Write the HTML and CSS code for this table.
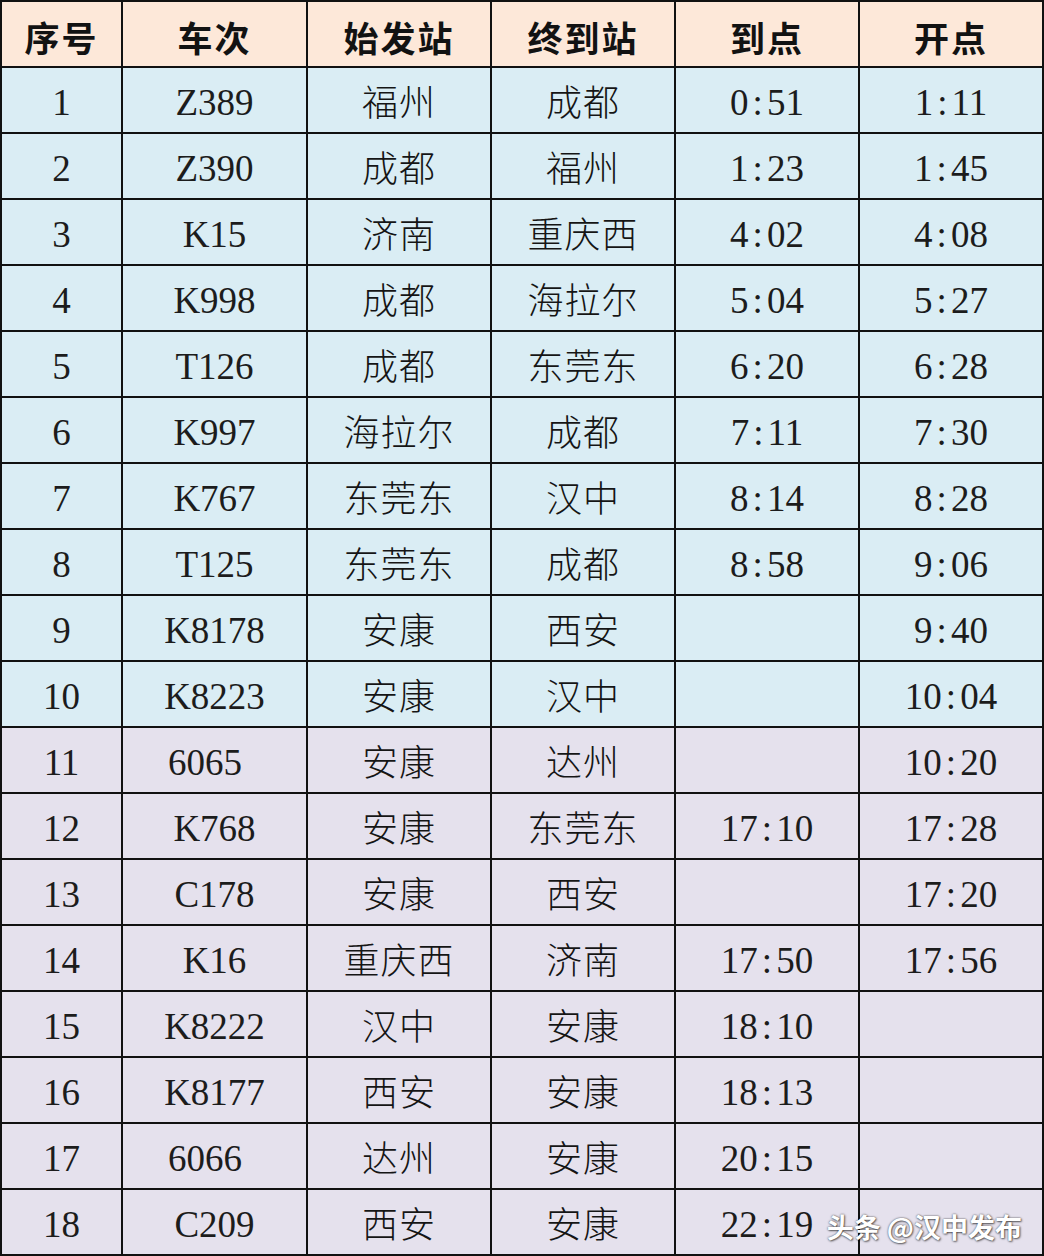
FILE: index.html
```html
<!DOCTYPE html>
<html lang="zh-CN">
<head>
<meta charset="utf-8">
<title>列车时刻表</title>
<link rel="stylesheet" href="styles.css">
</head>
<body>
<div class="page">
  <div class="grid">
    <div class="cell head">序号</div><div class="cell head">车次</div><div class="cell head">始发站</div><div class="cell head">终到站</div><div class="cell head">到点</div><div class="cell head">开点</div>

    <div class="cell b num">1</div><div class="cell b num">Z389</div><div class="cell b zh">福州</div><div class="cell b zh">成都</div><div class="cell b num">0<span class="c">:</span>51</div><div class="cell b num">1<span class="c">:</span>11</div>
    <div class="cell b num">2</div><div class="cell b num">Z390</div><div class="cell b zh">成都</div><div class="cell b zh">福州</div><div class="cell b num">1<span class="c">:</span>23</div><div class="cell b num">1<span class="c">:</span>45</div>
    <div class="cell b num">3</div><div class="cell b num">K15</div><div class="cell b zh">济南</div><div class="cell b zh">重庆西</div><div class="cell b num">4<span class="c">:</span>02</div><div class="cell b num">4<span class="c">:</span>08</div>
    <div class="cell b num">4</div><div class="cell b num">K998</div><div class="cell b zh">成都</div><div class="cell b zh">海拉尔</div><div class="cell b num">5<span class="c">:</span>04</div><div class="cell b num">5<span class="c">:</span>27</div>
    <div class="cell b num">5</div><div class="cell b num">T126</div><div class="cell b zh">成都</div><div class="cell b zh">东莞东</div><div class="cell b num">6<span class="c">:</span>20</div><div class="cell b num">6<span class="c">:</span>28</div>
    <div class="cell b num">6</div><div class="cell b num">K997</div><div class="cell b zh">海拉尔</div><div class="cell b zh">成都</div><div class="cell b num">7<span class="c">:</span>11</div><div class="cell b num">7<span class="c">:</span>30</div>
    <div class="cell b num">7</div><div class="cell b num">K767</div><div class="cell b zh">东莞东</div><div class="cell b zh">汉中</div><div class="cell b num">8<span class="c">:</span>14</div><div class="cell b num">8<span class="c">:</span>28</div>
    <div class="cell b num">8</div><div class="cell b num">T125</div><div class="cell b zh">东莞东</div><div class="cell b zh">成都</div><div class="cell b num">8<span class="c">:</span>58</div><div class="cell b num">9<span class="c">:</span>06</div>
    <div class="cell b num">9</div><div class="cell b num">K8178</div><div class="cell b zh">安康</div><div class="cell b zh">西安</div><div class="cell b num"></div><div class="cell b num">9<span class="c">:</span>40</div>
    <div class="cell b num">10</div><div class="cell b num">K8223</div><div class="cell b zh">安康</div><div class="cell b zh">汉中</div><div class="cell b num"></div><div class="cell b num">10<span class="c">:</span>04</div>

    <div class="cell p num">11</div><div class="cell p num shift">6065</div><div class="cell p zh">安康</div><div class="cell p zh">达州</div><div class="cell p num"></div><div class="cell p num">10<span class="c">:</span>20</div>
    <div class="cell p num">12</div><div class="cell p num">K768</div><div class="cell p zh">安康</div><div class="cell p zh">东莞东</div><div class="cell p num">17<span class="c">:</span>10</div><div class="cell p num">17<span class="c">:</span>28</div>
    <div class="cell p num">13</div><div class="cell p num">C178</div><div class="cell p zh">安康</div><div class="cell p zh">西安</div><div class="cell p num"></div><div class="cell p num">17<span class="c">:</span>20</div>
    <div class="cell p num">14</div><div class="cell p num">K16</div><div class="cell p zh">重庆西</div><div class="cell p zh">济南</div><div class="cell p num">17<span class="c">:</span>50</div><div class="cell p num">17<span class="c">:</span>56</div>
    <div class="cell p num">15</div><div class="cell p num">K8222</div><div class="cell p zh">汉中</div><div class="cell p zh">安康</div><div class="cell p num">18<span class="c">:</span>10</div><div class="cell p num"></div>
    <div class="cell p num">16</div><div class="cell p num">K8177</div><div class="cell p zh">西安</div><div class="cell p zh">安康</div><div class="cell p num">18<span class="c">:</span>13</div><div class="cell p num"></div>
    <div class="cell p num">17</div><div class="cell p num shift">6066</div><div class="cell p zh">达州</div><div class="cell p zh">安康</div><div class="cell p num">20<span class="c">:</span>15</div><div class="cell p num"></div>
    <div class="cell p num">18</div><div class="cell p num">C209</div><div class="cell p zh">西安</div><div class="cell p zh">安康</div><div class="cell p num">22<span class="c">:</span>19</div><div class="cell p num"></div>
  </div>
  <div class="watermark">头条 @汉中发布</div>
</div>
</body>
</html>
```

FILE: styles.css
```css
html, body {
  margin: 0;
  padding: 0;
  background: #ffffff;
}

.page {
  position: relative;
  width: 1044px;
  height: 1256px;
  overflow: hidden;
}

.grid {
  display: grid;
  grid-template-columns: 119px 183px 182px 182px 182px 182px;
  grid-auto-rows: 64px;
  gap: 2px;
  padding: 2px;
  background: #111111;
  width: 1044px;
  box-sizing: border-box;
}

.cell {
  display: flex;
  align-items: center;
  justify-content: center;
  padding-top: 4px;
  box-sizing: border-box;
  color: #151515;
  white-space: nowrap;
}

.head {
  background: #fde8d9;
  font-family: "Noto Sans CJK SC", sans-serif;
  font-weight: 700;
  font-size: 35px;
  letter-spacing: 2px;
  color: #121212;
}

.b {
  background: #daedf4;
}

.p {
  background: #e5e1ed;
}

.num {
  font-family: "Liberation Serif", "Noto Sans CJK SC", serif;
  font-size: 37px;
  color: #1c1c1c;
}

.zh {
  font-family: "Noto Sans CJK SC", sans-serif;
  font-weight: 300;
  font-size: 36px;
  letter-spacing: 1px;
  padding-top: 0;
}

.c {
  display: inline-block;
  margin: 0 4px;
}

.shift {
  padding-right: 19px;
}

.watermark {
  position: absolute;
  right: 22px;
  bottom: 16px;
  font-family: "Noto Sans CJK SC", sans-serif;
  font-weight: 700;
  font-size: 27px;
  line-height: 1;
  color: #ffffff;
  text-shadow: 0 0 2px rgba(0, 0, 0, 0.7), 1px 1px 2px rgba(0, 0, 0, 0.5);
}
```
